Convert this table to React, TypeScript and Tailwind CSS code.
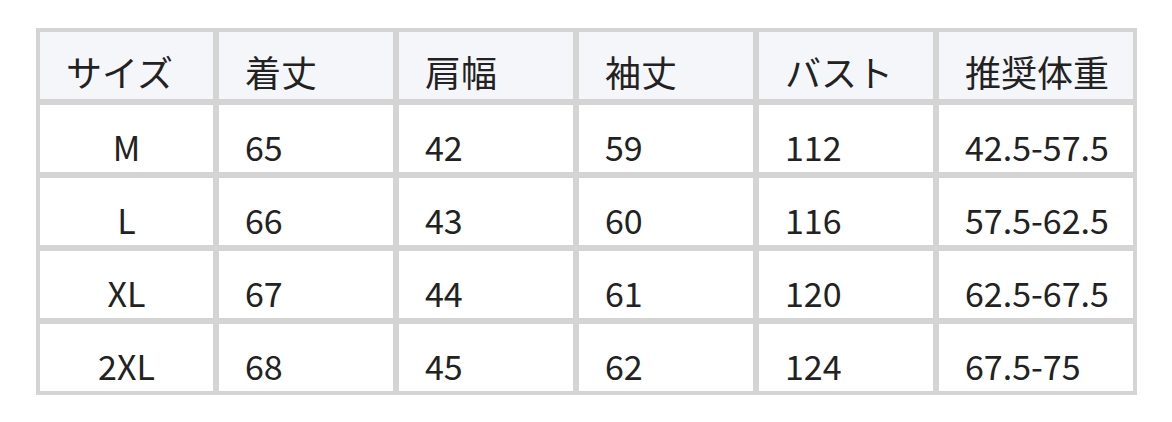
import React from "react";

const headers = ["サイズ", "着丈", "肩幅", "袖丈", "バスト", "推奨体重"];
const rows = [
  ["M", "65", "42", "59", "112", "42.5-57.5"],
  ["L", "66", "43", "60", "116", "57.5-62.5"],
  ["XL", "67", "44", "61", "120", "62.5-67.5"],
  ["2XL", "68", "45", "62", "124", "67.5-75"],
];

export default function App() {
  return (
    <div
      className="w-[1172px] h-[422px] bg-white pt-[28px] pl-[36px]"
      style={{ fontFamily: '"Noto Sans CJK JP", "Noto Sans", sans-serif' }}
    >
      <div className="grid w-[1101px] grid-cols-[173px_174px_174px_174px_174px_194px] auto-rows-[67px] gap-[6px] bg-[#d4d4d4] p-[4px] text-[#222222]">
        {headers.map((h) => (
          <div
            key={h}
            className="flex items-end bg-[#f5f6fa] pl-[26px] pb-[1px] text-[36px] leading-normal"
          >
            {h}
          </div>
        ))}
        {rows.map((r) =>
          r.map((c, i) => (
            <div
              key={r[0] + i}
              className={
                i === 0
                  ? "flex items-end justify-center bg-white pb-[0px] text-[34px] leading-normal"
                  : "flex items-end bg-white pl-[26px] pb-[0px] text-[34px] leading-normal"
              }
            >
              {c}
            </div>
          ))
        )}
      </div>
    </div>
  );
}
